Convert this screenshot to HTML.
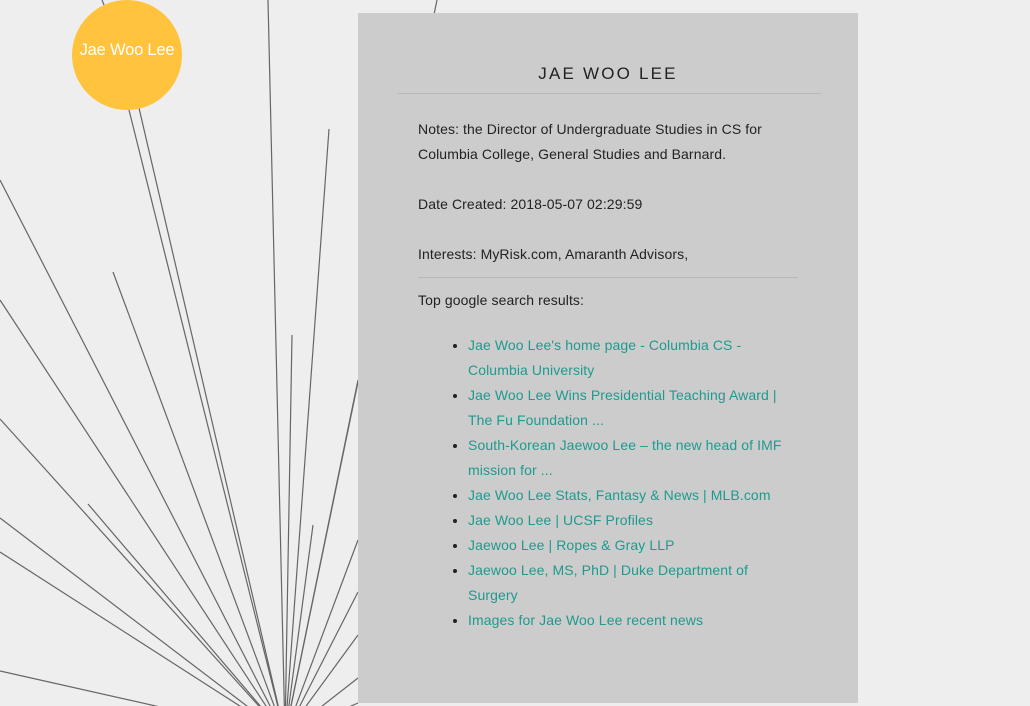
<!DOCTYPE html>
<html><head><meta charset="utf-8"><style>
body{margin:0;width:1030px;height:706px;background:#eee;overflow:hidden;position:relative;font-family:"Liberation Sans",sans-serif;}
svg{position:absolute;left:0;top:0}
.circle{position:absolute;left:72px;top:0;width:110px;height:110px;border-radius:50%;background:#ffc33d;color:#fff;font-size:16.5px;text-align:center;line-height:100px;letter-spacing:-0.2px}
.panel{position:absolute;left:358px;top:13px;width:500px;height:690px;background:#ccc;color:#222;}
h1{position:absolute;left:0;width:500px;top:51px;margin:0;text-align:center;font-weight:normal;font-size:17px;letter-spacing:2.2px;color:#222}
.hr1{position:absolute;left:39px;top:80px;width:424px;height:1px;background:#b8b8b8}
.c{position:absolute;left:60px;top:104px;font-size:14px;line-height:25px;white-space:nowrap;letter-spacing:0.1px}
.hr2{width:380px;height:1px;background:#b8b8b8;margin:10px 0 0}
ul{margin:0;padding:0 0 0 50px;list-style:disc}
li{color:#1f9a8e}
li::marker{color:#222}
</style></head><body>
<svg width="1030" height="706" stroke="#666" stroke-width="1.2">
<line x1="102" y1="0" x2="106" y2="10"/>
<line x1="268" y1="0" x2="285" y2="735"/>
<line x1="437" y1="0" x2="285" y2="735"/>
<line x1="129" y1="110" x2="285" y2="735"/>
<line x1="139" y1="108" x2="285" y2="735"/>
<line x1="0" y1="180" x2="285" y2="735"/>
<line x1="113" y1="272" x2="285" y2="735"/>
<line x1="0" y1="300" x2="285" y2="735"/>
<line x1="0" y1="419" x2="285" y2="735"/>
<line x1="88" y1="504" x2="285" y2="735"/>
<line x1="0" y1="518" x2="285" y2="735"/>
<line x1="0" y1="552" x2="285" y2="735"/>
<line x1="0" y1="671" x2="285" y2="735"/>
<line x1="329" y1="129" x2="285" y2="735"/>
<line x1="292" y1="335" x2="285" y2="735"/>
<line x1="313" y1="525" x2="285" y2="735"/>
<line x1="358" y1="380" x2="285" y2="735"/>
<line x1="358" y1="540" x2="285" y2="735"/>
<line x1="358" y1="592" x2="285" y2="735"/>
<line x1="358" y1="635" x2="285" y2="735"/>
<line x1="358" y1="678" x2="285" y2="735"/>
<line x1="358" y1="703" x2="285" y2="735"/>
</svg>
<div class="circle">Jae Woo Lee</div>
<div class="panel">
<h1>JAE WOO LEE</h1>
<div class="hr1"></div>
<div class="c">
Notes: the Director of Undergraduate Studies in CS for<br>Columbia College, General Studies and Barnard.<br><br>
Date Created: 2018-05-07 02:29:59<br><br>
Interests: MyRisk.com, Amaranth Advisors,
<div class="hr2"></div>
<div style="margin-top:10px">Top google search results:</div>
<ul style="margin-top:20px">
<li>Jae Woo Lee's home page - Columbia CS -<br>Columbia University</li>
<li>Jae Woo Lee Wins Presidential Teaching Award |<br>The Fu Foundation ...</li>
<li>South-Korean Jaewoo Lee – the new head of IMF<br>mission for ...</li>
<li>Jae Woo Lee Stats, Fantasy &amp; News | MLB.com</li>
<li>Jae Woo Lee | UCSF Profiles</li>
<li>Jaewoo Lee | Ropes &amp; Gray LLP</li>
<li>Jaewoo Lee, MS, PhD | Duke Department of<br>Surgery</li>
<li>Images for Jae Woo Lee recent news</li>
</ul>
</div>
</div>
</body></html>
